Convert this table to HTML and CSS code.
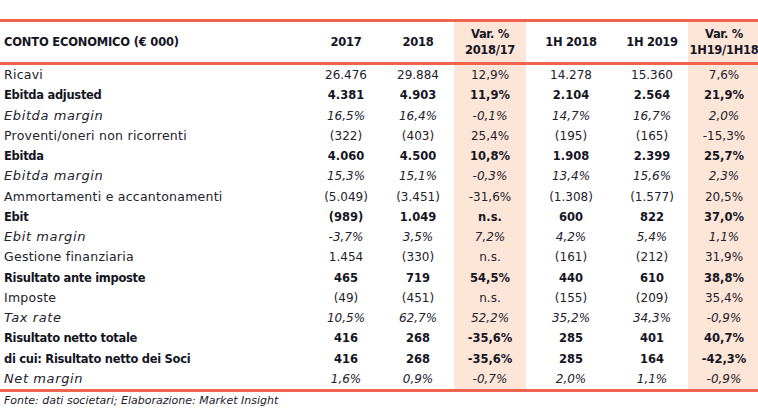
FILE: index.html
```html
<!DOCTYPE html>
<html lang="it">
<head>
<meta charset="utf-8">
<title>Conto economico</title>
<link rel="stylesheet" href="styles.css">
</head>
<body>
<table class="ce">
  <colgroup>
    <col class="c-label"><col class="c-n"><col class="c-n"><col class="c-v"><col class="c-h"><col class="c-n"><col class="c-v">
  </colgroup>
  <thead>
    <tr>
      <th class="lbl">CONTO ECONOMICO (€ 000)</th>
      <th>2017</th>
      <th>2018</th>
      <th class="sh">Var. %<br>2018/17</th>
      <th>1H 2018</th>
      <th>1H 2019</th>
      <th class="sh">Var. %<br>1H19/1H18</th>
    </tr>
  </thead>
  <tbody>
    <tr><td class="lbl">Ricavi</td><td>26.476</td><td>29.884</td><td class="sh">12,9%</td><td>14.278</td><td>15.360</td><td class="sh">7,6%</td></tr>
    <tr class="b"><td class="lbl">Ebitda adjusted</td><td>4.381</td><td>4.903</td><td class="sh">11,9%</td><td>2.104</td><td>2.564</td><td class="sh">21,9%</td></tr>
    <tr class="i"><td class="lbl">Ebitda margin</td><td>16,5%</td><td>16,4%</td><td class="sh">-0,1%</td><td>14,7%</td><td>16,7%</td><td class="sh">2,0%</td></tr>
    <tr><td class="lbl">Proventi/oneri non ricorrenti</td><td>(322)</td><td>(403)</td><td class="sh">25,4%</td><td>(195)</td><td>(165)</td><td class="sh">-15,3%</td></tr>
    <tr class="b"><td class="lbl">Ebitda</td><td>4.060</td><td>4.500</td><td class="sh">10,8%</td><td>1.908</td><td>2.399</td><td class="sh">25,7%</td></tr>
    <tr class="i"><td class="lbl">Ebitda margin</td><td>15,3%</td><td>15,1%</td><td class="sh">-0,3%</td><td>13,4%</td><td>15,6%</td><td class="sh">2,3%</td></tr>
    <tr><td class="lbl">Ammortamenti e accantonamenti</td><td>(5.049)</td><td>(3.451)</td><td class="sh">-31,6%</td><td>(1.308)</td><td>(1.577)</td><td class="sh">20,5%</td></tr>
    <tr class="b"><td class="lbl">Ebit</td><td>(989)</td><td>1.049</td><td class="sh">n.s.</td><td>600</td><td>822</td><td class="sh">37,0%</td></tr>
    <tr class="i"><td class="lbl">Ebit margin</td><td>-3,7%</td><td>3,5%</td><td class="sh">7,2%</td><td>4,2%</td><td>5,4%</td><td class="sh">1,1%</td></tr>
    <tr><td class="lbl">Gestione finanziaria</td><td>1.454</td><td>(330)</td><td class="sh">n.s.</td><td>(161)</td><td>(212)</td><td class="sh">31,9%</td></tr>
    <tr class="b"><td class="lbl">Risultato ante imposte</td><td>465</td><td>719</td><td class="sh">54,5%</td><td>440</td><td>610</td><td class="sh">38,8%</td></tr>
    <tr><td class="lbl">Imposte</td><td>(49)</td><td>(451)</td><td class="sh">n.s.</td><td>(155)</td><td>(209)</td><td class="sh">35,4%</td></tr>
    <tr class="i"><td class="lbl">Tax rate</td><td>10,5%</td><td>62,7%</td><td class="sh">52,2%</td><td>35,2%</td><td>34,3%</td><td class="sh">-0,9%</td></tr>
    <tr class="b"><td class="lbl">Risultato netto totale</td><td>416</td><td>268</td><td class="sh">-35,6%</td><td>285</td><td>401</td><td class="sh">40,7%</td></tr>
    <tr class="b"><td class="lbl">di cui: Risultato netto dei Soci</td><td>416</td><td>268</td><td class="sh">-35,6%</td><td>285</td><td>164</td><td class="sh">-42,3%</td></tr>
    <tr class="i last"><td class="lbl">Net margin</td><td>1,6%</td><td>0,9%</td><td class="sh">-0,7%</td><td>2,0%</td><td>1,1%</td><td class="sh">-0,9%</td></tr>
  </tbody>
</table>
<p class="src">Fonte: dati societari; Elaborazione: Market Insight</p>
</body>
</html>
```
FILE: styles.css
```css
html, body {
  margin: 0;
  padding: 0;
  background: #ffffff;
}
body {
  font-family: "DejaVu Sans", "Noto Sans", sans-serif;
  color: #22222c;
  width: 758px;
}
.ce {
  border-collapse: collapse;
  table-layout: fixed;
  width: 758px;
  margin-top: 19px;
  font-size: 12px;
}
.c-label { width: 310px; }
.c-n { width: 72px; }
.c-v { width: 72px; }
.c-h { width: 90px; }
.ce th {
  height: 40px;
  padding: 0;
  font-size: 11.5px;
  font-weight: bold;
  text-align: center;
  vertical-align: middle;
  line-height: 16px;
  letter-spacing: -0.3px;
  white-space: nowrap;
  border-top: 3px solid #f0634e;
  border-bottom: 3px solid #f0634e;
  color: #15151f;
}
.ce th.lbl {
  text-align: left;
  padding-left: 4px;
  letter-spacing: -0.2px;
}
.ce td {
  height: 20.25px;
  padding: 0;
  text-align: center;
  vertical-align: middle;
  line-height: 18px;
  white-space: nowrap;
}
.ce td.lbl {
  text-align: left;
  padding-left: 4px;
  font-size: 12.5px;
  letter-spacing: 0.25px;
}
.ce .sh {
  background: #fde6d8;
}
.ce tr.b td {
  font-weight: bold;
  font-size: 11.5px;
  color: #15151f;
}
.ce tr.b td.lbl {
  font-size: 11.5px;
  letter-spacing: -0.3px;
}
.ce tr.i td {
  font-style: italic;
}
.ce tr.i td.lbl {
  font-size: 13px;
  letter-spacing: 0.6px;
}
.ce tr.last td {
  border-bottom: 3px solid #f0634e;
}
.src {
  margin: 2px 0 0 4px;
  font-size: 11px;
  font-style: italic;
}
```
